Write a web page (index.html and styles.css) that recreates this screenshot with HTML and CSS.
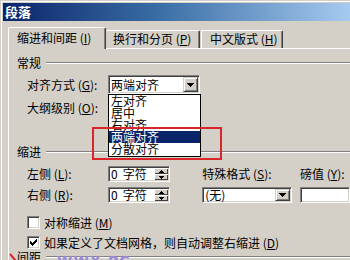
FILE: index.html
```html
<!DOCTYPE html>
<html lang="zh-CN">
<head>
<meta charset="utf-8">
<title>段落</title>
<link rel="stylesheet" href="styles.css">
</head>
<body>
<div class="win">
  <div class="title">段落</div>
  <div class="tabs">
    <div class="tab active">缩进和间距 (<u>I</u>)</div>
    <div class="tab second">换行和分页 (<u>P</u>)</div>
    <div class="tab third">中文版式 (<u>H</u>)</div>
  </div>
  <div class="panel">
    <div class="legend first">常规</div>
    <div class="row r1">
      <span class="lbl">对齐方式 (<u>G</u>):</span>
      <div class="combo wide"><span class="val">两端对齐</span><span class="btn"><svg width="7" height="4" viewBox="0 0 7 4"><path d="M0 0h7v1H0zM1 1h5v1H1zM2 2h3v1H2zM3 3h1v1H3z"/></svg></span></div>
    </div>
    <div class="row r2">
      <span class="lbl">大纲级别 (<u>O</u>):</span>
      <div class="combo wide"><span class="btn"><svg width="7" height="4" viewBox="0 0 7 4"><path d="M0 0h7v1H0zM1 1h5v1H1zM2 2h3v1H2zM3 3h1v1H3z"/></svg></span></div>
    </div>
    <div class="legend second">缩进</div>
    <div class="indent">
      <div class="col-left">
        <div class="srow"><span class="lbl">左侧 (<u>L</u>):</span><div class="spin"><span class="val"><span class="num">0</span>字符</span><span class="spinbtns"><span class="sb"><svg width="5" height="3" viewBox="0 0 5 3"><path d="M2 0h1v1H2zM1 1h3v1H1zM0 2h5v1H0z"/></svg></span><span class="sb"><svg width="5" height="3" viewBox="0 0 5 3"><path d="M0 0h5v1H0zM1 1h3v1H1zM2 2h1v1H2z"/></svg></span></span></div></div>
        <div class="srow"><span class="lbl">右侧 (<u>R</u>):</span><div class="spin"><span class="val"><span class="num">0</span>字符</span><span class="spinbtns"><span class="sb"><svg width="5" height="3" viewBox="0 0 5 3"><path d="M2 0h1v1H2zM1 1h3v1H1zM0 2h5v1H0z"/></svg></span><span class="sb"><svg width="5" height="3" viewBox="0 0 5 3"><path d="M0 0h5v1H0zM1 1h3v1H1zM2 2h1v1H2z"/></svg></span></span></div></div>
      </div>
      <div class="col-mid">
        <div class="srow">特殊格式 (<u>S</u>):</div>
        <div class="combo small"><span class="val">(无)</span><span class="btn"><svg width="7" height="4" viewBox="0 0 7 4"><path d="M0 0h7v1H0zM1 1h5v1H1zM2 2h3v1H2zM3 3h1v1H3z"/></svg></span></div>
      </div>
      <div class="col-right">
        <div class="srow">磅值 (<u>Y</u>):</div>
        <div class="textbox"></div>
      </div>
    </div>
    <div class="check c1"><span class="box"></span><span>对称缩进 (<u>M</u>)</span></div>
    <div class="check c2"><span class="box"><svg width="7" height="7" viewBox="0 0 7 7"><path d="M6 0h1v1H6zM5 1h2v1H5zM0 2h1v1H0zM4 2h3v1H4zM0 3h2v1H0zM3 3h3v1H3zM0 4h5v1H0zM1 5h3v1H1zM2 6h1v1H2z"/></svg></span><span>如果定义了文档网格，则自动调整右缩进 (<u>D</u>)</span></div>
    <div class="legend third">间距</div>
  </div>

  <ul class="droplist">
    <li>左对齐</li>
    <li>居中</li>
    <li>右对齐</li>
    <li class="sel">两端对齐</li>
    <li>分散对齐</li>
  </ul>
  <div class="redbox"></div>
  <div class="mark"><svg width="8" height="8" viewBox="0 0 8 8"><path d="M1 1L7 8" stroke="#d8262b" stroke-width="2" fill="none"/></svg></div>
  <div class="wm">WWX.PC</div>
</div>
</body>
</html>
```
FILE: styles.css
```css
html, body {
  margin: 0;
  padding: 0;
  width: 350px;
  height: 260px;
  overflow: hidden;
  background: #d4d0c8;
}

.win {
  position: relative;
  box-sizing: border-box;
  width: 350px;
  height: 260px;
  padding: 3px 0 0 3px;
  background: #d4d0c8;
  box-shadow: inset 1px 1px #d4d0c8, inset 2px 2px #ffffff;
  font-family: "Noto Sans CJK SC", "Noto Sans", sans-serif;
  font-size: 12px;
  line-height: 12px;
  color: #000;
  overflow: hidden;
}

u { text-decoration: underline; text-underline-offset: 1px; }

.title {
  height: 18px;
  line-height: 18px;
  padding-left: 2px;
  background: linear-gradient(to right, #0a246a 0%, #3a6ea5 45%, #a6caf0 100%);
  color: #fff;
  font-weight: bold;
  font-size: 13px;
}

.tabs {
  display: flex;
  align-items: flex-end;
  height: 21px;
  margin-top: 6px;
  padding-left: 5px;
}

.tab {
  box-sizing: border-box;
  height: 18px;
  line-height: 16px;
  border-top: 1px solid #fff;
  border-left: 1px solid #fff;
  border-right: 1px solid #404040;
  box-shadow: inset -1px 0 #808080;
  border-radius: 2px 2px 0 0;
  background: #d4d0c8;
  white-space: nowrap;
}

.tab.active {
  position: relative;
  z-index: 2;
  width: 98px;
  height: 22px;
  margin-bottom: -1px;
  padding: 4px 0 0 8px;
  line-height: 12px;
}

.tab.second {
  width: 94px;
  border-left: none;
  padding-left: 7px;
}

.tab.third {
  width: 82px;
  margin-left: 1px;
  padding-left: 8px;
}

.panel {
  position: relative;
  margin-left: 5px;
  border-top: 1px solid #fff;
  border-left: 1px solid #fff;
  height: 260px;
}

.legend {
  display: flex;
  align-items: center;
  gap: 5px;
  height: 12px;
  padding-left: 8px;
  white-space: nowrap;
}

.legend::after {
  content: "";
  flex: 1;
  border-top: 1px solid #808080;
  border-bottom: 1px solid #ffffff;
}

.legend.first { margin-top: 8px; }
.legend.second { margin-top: 29px; }
.legend.third { margin-top: 2px; }

.row {
  display: flex;
  align-items: center;
  height: 19px;
  padding-left: 18px;
}
.row.r1 { margin-top: 6px; }
.row.r2 { margin-top: 4px; }

.lbl {
  width: 81px;
  flex: none;
  white-space: nowrap;
}

.combo, .spin, .textbox {
  position: relative;
  box-sizing: border-box;
  background: #fff;
  border: 1px solid;
  border-color: #808080 #ffffff #ffffff #808080;
  box-shadow: inset 1px 1px #404040, inset -1px -1px #d4d0c8;
  display: flex;
  align-items: center;
  white-space: nowrap;
}

.combo.wide { width: 92px; height: 19px; }
.combo.small { width: 90px; height: 16px; }

.val { padding-left: 2px; }

.btn {
  position: absolute;
  right: 1px;
  top: 1px;
  bottom: 1px;
  width: 15px;
  box-sizing: border-box;
  background: #d4d0c8;
  border: 1px solid;
  border-color: #d4d0c8 #404040 #404040 #d4d0c8;
  box-shadow: inset 1px 1px #fff, inset -1px -1px #808080;
  display: flex;
  align-items: center;
  justify-content: center;
}

.btn svg, .sb svg { display: block; fill: #000; }

.indent {
  display: flex;
  margin-top: 8px;
  padding-left: 18px;
}

.col-left {
  width: 183px;
  display: flex;
  flex-direction: column;
  gap: 5px;
}

.col-mid {
  width: 102px;
  display: flex;
  flex-direction: column;
  gap: 5px;
}

.col-right {
  display: flex;
  flex-direction: column;
  gap: 5px;
}

.srow {
  display: flex;
  align-items: center;
  height: 16px;
  white-space: nowrap;
}

.spin { width: 62px; height: 16px; }
.num { margin-right: 5px; }

.spinbtns {
  position: absolute;
  right: 1px;
  top: 1px;
  bottom: 1px;
  width: 14px;
  display: flex;
  flex-direction: column;
}

.sb {
  flex: 1;
  background: #d4d0c8;
  box-shadow: inset 1px 1px #fff, inset -1px -1px #404040;
  display: flex;
  align-items: center;
  justify-content: center;
}

.textbox { width: 50px; height: 16px; }

.check {
  display: flex;
  align-items: center;
  gap: 4px;
  height: 13px;
  padding-left: 18px;
  white-space: nowrap;
}
.check.c1 { margin-top: 13px; }
.check.c2 { margin-top: 7px; }

.box {
  position: relative;
  box-sizing: border-box;
  width: 13px;
  height: 13px;
  flex: none;
  background: #fff;
  border: 1px solid;
  border-color: #808080 #ffffff #ffffff #808080;
  box-shadow: inset 1px 1px #404040, inset -1px -1px #d4d0c8;
}

.box svg {
  position: absolute;
  left: 2px;
  top: 2px;
  fill: #000;
}

.droplist {
  position: absolute;
  left: 108px;
  top: 94px;
  width: 93px;
  height: 63px;
  box-sizing: border-box;
  margin: 0;
  padding: 0;
  list-style: none;
  border: 1px solid #000;
  background: #fff;
  z-index: 5;
}

.droplist li {
  height: 12px;
  line-height: 12px;
  padding-left: 2px;
  white-space: nowrap;
}

.droplist li.sel {
  background: #0a246a;
  color: #fff;
}

.redbox {
  position: absolute;
  left: 92px;
  top: 127px;
  width: 130px;
  height: 33px;
  box-sizing: border-box;
  border: 2px solid #d8262b;
  z-index: 6;
}

.mark {
  position: absolute;
  left: 9px;
  top: 253px;
  z-index: 6;
}
.mark svg { display: block; }

.wm {
  position: absolute;
  left: 57px;
  top: 254px;
  font-family: "DejaVu Sans", sans-serif;
  font-weight: bold;
  font-size: 14px;
  line-height: 14px;
  color: #9a8ad6;
  letter-spacing: 1px;
  z-index: 6;
}
```
